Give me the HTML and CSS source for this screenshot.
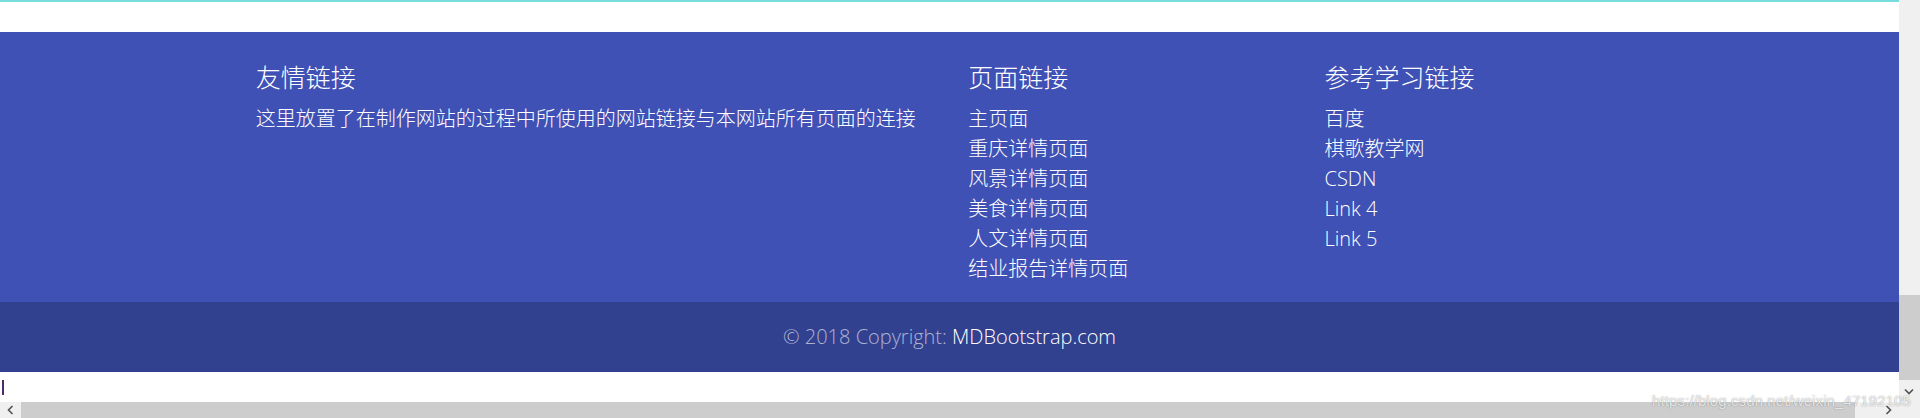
FILE: index.html
```html
<!DOCTYPE html>
<html lang="zh-CN">
<head>
<meta charset="utf-8">
<title>Footer</title>
<link rel="stylesheet" href="styles.css">
</head>
<body>
<div class="screen">
  <div class="viewport">
    <div class="top-line"></div>
    <div class="top-gap"></div>
    <footer class="page-footer">
      <div class="container">
        <div class="row">
          <div class="col col-wide">
            <h5 class="title">友情链接</h5>
            <p class="desc">这里放置了在制作网站的过程中所使用的网站链接与本网站所有页面的连接</p>
          </div>
          <div class="col">
            <h5 class="title">页面链接</h5>
            <ul class="links">
              <li><a href="#">主页面</a></li>
              <li><a href="#">重庆详情页面</a></li>
              <li><a href="#">风景详情页面</a></li>
              <li><a href="#">美食详情页面</a></li>
              <li><a href="#">人文详情页面</a></li>
              <li><a href="#">结业报告详情页面</a></li>
            </ul>
          </div>
          <div class="col">
            <h5 class="title">参考学习链接</h5>
            <ul class="links">
              <li><a href="#">百度</a></li>
              <li><a href="#">棋歌教学网</a></li>
              <li><a href="#">CSDN</a></li>
              <li><a href="#">Link 4</a></li>
              <li><a href="#">Link 5</a></li>
            </ul>
          </div>
        </div>
      </div>
      <div class="copyright">© 2018 Copyright: <a href="#">MDBootstrap.com</a></div>
    </footer>
    <div class="after"><span class="caret"></span></div>
  </div>
  <div class="vscroll">
    <div class="vtrack"></div>
    <div class="vthumb"></div>
    <div class="vbtn">
      <svg width="10" height="7" viewBox="0 0 10 7"><path d="M1 1.5 L5 5.5 L9 1.5" fill="none" stroke="#505050" stroke-width="1.6"/></svg>
    </div>
  </div>
  <div class="hscroll">
    <div class="hbtn">
      <svg width="7" height="10" viewBox="0 0 7 10"><path d="M5.5 1 L1.5 5 L5.5 9" fill="none" stroke="#505050" stroke-width="1.6"/></svg>
    </div>
    <div class="hthumb"></div>
    <div class="htrack">
      <svg width="7" height="10" viewBox="0 0 7 10"><path d="M1.5 1 L5.5 5 L1.5 9" fill="none" stroke="#505050" stroke-width="1.6"/></svg>
    </div>
  </div>
  <div class="corner"></div>
  <div class="watermark">https://blog.csdn.net/weixin_47192105</div>
</div>
</body>
</html>
```
FILE: styles.css
```css
html, body {
  margin: 0;
  padding: 0;
  width: 1920px;
  height: 418px;
  overflow: hidden;
  background: #ffffff;
}

.screen {
  position: relative;
  display: grid;
  grid-template-columns: 1899px 21px;
  grid-template-rows: 402px 16px;
  width: 1920px;
  height: 418px;
  font-family: "Open Sans", "Noto Sans CJK SC", sans-serif;
  font-weight: 300;
}

.viewport {
  display: flex;
  flex-direction: column;
  background: #ffffff;
  overflow: hidden;
}

.top-line {
  height: 2px;
  background: #76dcdc;
}

.top-gap {
  height: 30px;
}

.page-footer {
  background: #3f51b5;
  color: #ffffff;
}

.container {
  width: 1425px;
  margin: 0 auto;
  padding-top: 30px;
}

.row {
  display: grid;
  grid-template-columns: 712.5px 356.25px 356.25px;
}

.col {
  padding: 0 18.75px;
}

.title {
  margin: 0 0 10px;
  font-size: 25px;
  line-height: 30px;
  font-weight: 300;
}

.desc {
  margin: 0 0 18px;
  padding-top: 2px;
  font-size: 20px;
  line-height: 30px;
  white-space: nowrap;
}

.links {
  list-style: none;
  margin: 0 0 18px;
  padding: 2px 0 0;
  font-size: 20px;
  line-height: 30px;
}

.links a {
  color: #ffffff;
  text-decoration: none;
}

.copyright {
  background: rgba(0, 0, 0, 0.2);
  padding: 20px 0;
  font-size: 20px;
  line-height: 30px;
  text-align: center;
  color: rgba(255, 255, 255, 0.6);
}

.copyright a {
  color: #ffffff;
  text-decoration: none;
}

.after {
  flex: 1;
  padding: 8px 0 0 2px;
}

.caret {
  display: block;
  width: 2px;
  height: 15px;
  background: #4b2c6c;
}

.vscroll {
  display: grid;
  grid-template-rows: 295px 85px 22px;
  background: #f0f0f0;
}

.vtrack {
  background: #f0f0f0;
}

.vthumb {
  background: #cdcdcd;
}

.vbtn {
  display: flex;
  align-items: center;
  justify-content: center;
  padding-right: 2px;
}

.hscroll {
  display: grid;
  grid-template-columns: 21px 1834px 44px;
  background: #f0f0f0;
}

.hbtn {
  display: flex;
  align-items: center;
  justify-content: center;
}

.hthumb {
  background: #cdcdcd;
}

.htrack {
  display: flex;
  align-items: center;
  justify-content: flex-end;
  padding-right: 7px;
}

.corner {
  background: #f0f0f0;
}

.watermark {
  position: absolute;
  right: 9px;
  bottom: 8px;
  font-family: "Liberation Sans", Arial, sans-serif;
  font-size: 15px;
  line-height: 18px;
  font-weight: 400;
  color: rgba(255, 255, 255, 0.8);
  text-shadow: 0 0 1px rgba(0, 0, 0, 0.35), 0 0 2px rgba(0, 0, 0, 0.15);
  letter-spacing: 0.1px;
}
```
